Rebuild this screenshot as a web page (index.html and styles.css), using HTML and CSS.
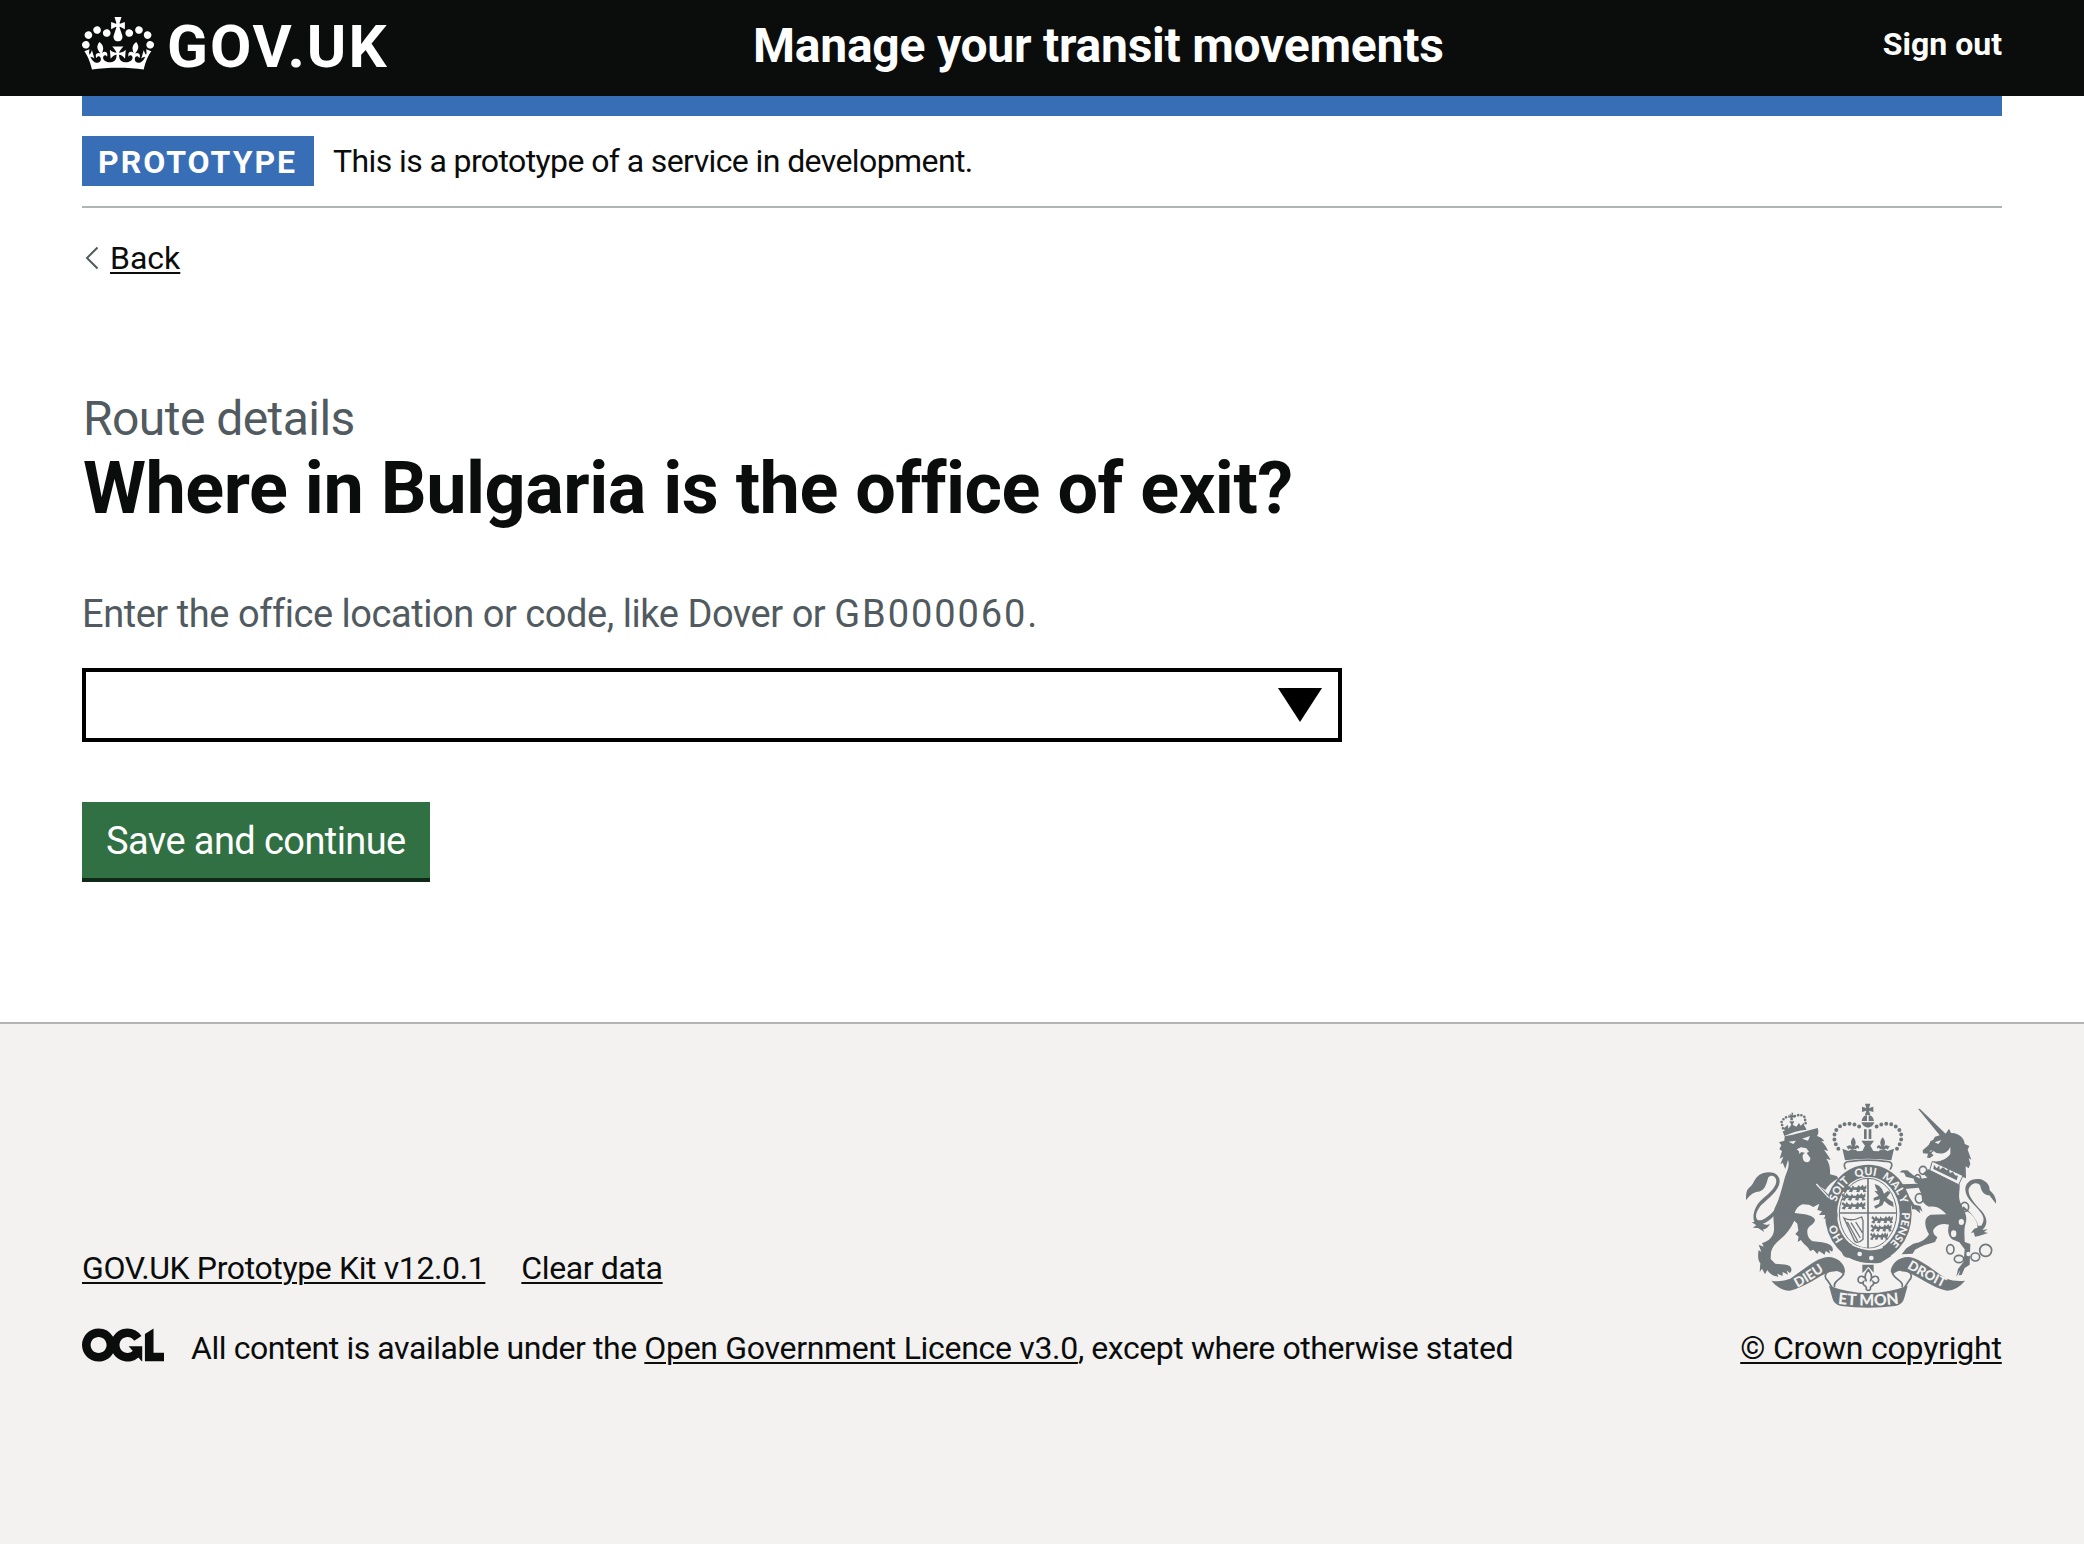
FILE: index.html
```html
<!DOCTYPE html>
<html lang="en">
<head>
<meta charset="utf-8">
<title>Where in Bulgaria is the office of exit? - Manage your transit movements</title>
<link rel="stylesheet" href="styles.css">
</head>
<body>
<header class="header">
  <div class="header-inner container">
    <a class="logo" href="#">
      <svg class="crown" viewBox="0 0 132 97" aria-hidden="true"><path fill="currentColor" fill-rule="evenodd" d="M25 30.2c3.5 1.5 7.7-.2 9.1-3.7 1.5-3.6-.2-7.8-3.9-9.2-3.6-1.4-7.6.3-9.1 3.9-1.4 3.5.3 7.5 3.9 9zM9 39.5c3.6 1.5 7.8-.2 9.2-3.7 1.5-3.6-.2-7.8-3.9-9.1-3.6-1.5-7.6.2-9.1 3.8-1.4 3.5.3 7.5 3.8 9zM4.4 57.2c3.5 1.5 7.7-.2 9.1-3.8 1.5-3.6-.2-7.7-3.9-9.1-3.5-1.5-7.6.3-9.1 3.8-1.4 3.5.3 7.6 3.9 9.1zm38.3-21.4c3.5 1.5 7.7-.2 9.1-3.8 1.5-3.6-.2-7.7-3.9-9.1-3.6-1.5-7.6.3-9.1 3.8-1.3 3.6.4 7.7 3.9 9.1zm64.4-5.6c-3.6 1.5-7.8-.2-9.1-3.7-1.5-3.6.2-7.8 3.8-9.2 3.6-1.4 7.7.3 9.2 3.9 1.3 3.5-.4 7.5-3.9 9zm15.9 9.3c-3.6 1.5-7.7-.2-9.1-3.7-1.5-3.6.2-7.8 3.7-9.1 3.6-1.5 7.7.2 9.2 3.8 1.5 3.5-.3 7.5-3.8 9zm4.7 17.7c-3.6 1.5-7.8-.2-9.2-3.8-1.5-3.6.2-7.7 3.9-9.1 3.6-1.5 7.7.3 9.2 3.8 1.3 3.5-.4 7.6-3.9 9.1zM89.3 35.8c-3.6 1.5-7.8-.2-9.2-3.8-1.4-3.6.2-7.7 3.9-9.1 3.6-1.5 7.7.3 9.2 3.8 1.4 3.6-.3 7.7-3.9 9.1zM69.7 17.7l8.9 4.7V9.3l-8.9 2.8c-.2-.3-.5-.6-.9-.9L72.4 0H59.6l3.5 11.2c-.3.3-.6.5-.9.9l-8.8-2.8v13.1l8.8-4.7c.3.3.6.7.9.9l-5 15.4v.1c-.2.8-.4 1.6-.4 2.4 0 4.1 3.1 7.5 7 8.1h.2c.3 0 .7.1 1 .1.4 0 .7 0 1-.1h.2c4-.6 7.1-4.1 7.1-8.1 0-.8-.1-1.7-.4-2.4V34l-5.1-15.4c.4-.2.7-.6 1-.9zM66 92.8c16.9 0 32.8 1.1 47.1 3.2 4-16.9 8.9-26.7 14-33.5l-9.6-3.4c1 4.9 1.1 7.2 0 10.2-1.5-1.4-3-4.3-4.2-8.7L108.6 76c2.8-2 5-3.2 7.5-3.3-4.4 9.4-10 11.9-13.6 11.2-4.3-.8-6.3-4.6-5.6-7.9 1-4.7 5.7-5.9 8-.5 4.3-8.7-3-11.4-7.6-8.8 7.1-7.2 7.9-13.5 2.1-21.1-8 6.1-8.1 12.3-4.5 20.8-4.7-5.4-12.1-2.5-9.5 6.2 3.4-5.2 7.9-2 7.2 3.1-.6 4.3-6.4 7.8-13.5 7.2-10.3-.9-10.9-8-11.2-13.8 2.5-.5 7.1 1.8 11 7.3L80.2 60c-4.1 4.4-8 5.3-12.3 5.4 1.4-4.4 8-11.6 8-11.6H55.5s6.4 7.2 7.9 11.6c-4.2-.1-8-1-12.3-5.4l1.4 16.4c3.9-5.5 8.5-7.7 10.9-7.3-.3 5.8-.9 12.8-11.1 13.8-7.2.6-12.9-2.9-13.5-7.2-.7-5 3.8-8.3 7.1-3.1 2.7-8.7-4.6-11.6-9.4-6.2 3.7-8.5 3.6-14.7-4.6-20.8-5.8 7.6-5 13.9 2.2 21.1-4.7-2.6-11.9.1-7.7 8.8 2.3-5.5 7.1-4.2 8.1.5.7 3.3-1.3 7.1-5.7 7.9-3.5.7-9-1.8-13.5-11.2 2.5.1 4.7 1.3 7.5 3.3l-4.7-15.4c-1.2 4.4-2.7 7.2-4.3 8.7-1.1-3-.9-5.3 0-10.2l-9.5 3.4c5 6.9 9.9 16.7 14 33.5 14.8-2.1 30.8-3.2 47.7-3.2z"/></svg>
      <span class="logotype">GOV.UK</span>
    </a>
    <a class="service-name" href="#">Manage your transit movements</a>
    <a class="sign-out" href="#">Sign out</a>
  </div>
</header>
<div class="container">
  <div class="header-bar"></div>
  <div class="phase-banner">
    <strong class="tag">PROTOTYPE</strong>
    <span class="phase-text">This is a prototype of a service in development.</span>
  </div>
  <a class="back" href="#">
    <svg class="back-arrow" viewBox="0 0 14 24" aria-hidden="true"><path d="M13.500 1.500 3 12l10.500 10.500" fill="none" stroke="#505a5f" stroke-width="2"/></svg>
    <span class="back-text">Back</span>
  </a>
  <main class="main">
    <span class="caption">Route details</span>
    <h1 class="heading">Where in Bulgaria is the office of exit?</h1>
    <div class="hint">Enter the office location or code, like Dover or <span class="code">GB000060.</span></div>
    <div class="combo">
      <svg class="combo-arrow" viewBox="0 0 44 34" aria-hidden="true"><path d="M0 0h44L22 34z"/></svg>
    </div>
    <button class="button">Save and continue</button>
  </main>
</div>
<footer class="footer">
  <div class="footer-inner container">
    <div class="footer-left">
      <div class="footer-links">
        <a href="#">GOV.UK Prototype Kit v12.0.1</a>
        <a href="#">Clear data</a>
      </div>
      <div class="licence">
        <svg class="ogl" viewBox="0 0 483.2 195.7" aria-hidden="true"><path fill="currentColor" d="M421.5 142.8V.1l-50.7 32.3v161.1h112.4v-50.7zm-122.3-9.6A47.12 47.12 0 0 1 221 97.8c0-26 21.1-47.1 47.1-47.1 16.7 0 31.4 8.7 39.7 21.8l42.7-27.2A97.63 97.63 0 0 0 268.1 0c-36.500 0-68.3 20.1-85.1 49.7A98 98 0 0 0 97.8 0C43.900 0 0 43.900 0 97.8s43.900 97.8 97.8 97.8c36.500 0 68.3-20.1 85.1-49.7a97.76 97.76 0 0 0 149.6 25.4l19.400 22.2h3v-87.8h-80l24.300 27.500zM97.8 145c-26 0-47.1-21.1-47.1-47.1s21.1-47.1 47.1-47.1 47.1 21.1 47.1 47.1S123.8 145 97.8 145"/></svg>
        <span class="licence-text">All content is available under the <a href="#">Open Government Licence v3.0</a>, except where otherwise stated</span>
      </div>
    </div>
    <div class="footer-right">
      <svg class="crest" viewBox="48 40 750 615" aria-hidden="true">
        <defs>
          <path id="garter" d="M415 487A101 115 0 0 1 415 257A101 115 0 0 1 415 487"/>
          <path id="ribbon-left" d="M190 600Q240 575 294 536"/>
          <path id="ribbon-right" d="M524 531Q575 562 647 597"/>
          <path id="ribbon-mid" d="M310 640Q415 656 520 640"/>
          <path id="fleur" d="M0-26C-9-15-8-8-4 2C-11-6-19-2-17 8C-13 4-9 6-8 10H8C9 6 13 4 17 8C19-2 11-6 4 2C8-8 9-15 0-26ZM-9 12H9L12 19H-12Z"/>
          <path id="patty" d="M-8-17H8L4-4L17-8V8L4 4L8 17H-8L-4 4L-17 8V-8L-4-4Z"/>
          <path id="walker" d="M-36-5L-31-11L-24-4L-20-12L-15-5L-8-3L-5-10L0-4L8-4L13-11L18-5L25-12L29-5L36-11V0L32 2L37 9L27 11L25 4L17 3L15 11L5 9L8 4L-3 3L-7 11L-17 9L-13 3L-22 4L-26 12L-36 8L-28 1Z"/>
        </defs>
        <g class="ink">
          <!-- lion -->
          <path d="M164 140C195 135 235 122 263 115C266 124 266 132 261 139C272 142 278 147 283 155L274 154C284 164 291 174 294 184L282 180C290 191 297 200 302 211L289 207C299 221 301 236 300 254L320 259L325 266C308 275 294 288 286 301L270 290L302 322C310 337 321 354 322 373C323 387 316 397 304 400L309 388L295 396L296 383L280 388L288 376L267 376L276 365L262 361L268 342L250 352L237 345L218 344C204 349 198 359 194 370L224 374C245 378 255 385 255 392C252 406 235 407 232 422C231 439 238 449 249 455C267 458 286 457 301 466C310 474 310 482 306 486L297 480L301 492L287 484L284 495L267 484L262 493L250 480L240 484C235 471 221 465 213 451L203 457L206 441L196 433L205 423L202 402L193 393C183 415 170 433 151 449C136 461 126 474 123 487L122 508L136 522C151 525 168 522 180 530C187 538 185 547 179 550L170 542L174 555L158 547L158 559L142 552L145 561C125 559 117 549 112 541L105 554L96 537L89 547L91 521C82 509 84 493 86 481L94 487L86 465L101 471L96 460C118 455 131 438 132 421C133 396 125 373 136 351C149 326 157 291 165 262C174 239 179 226 174 211L166 238L158 219L151 224L160 201L149 207L156 184L148 179L154 167L147 158L163 153Z"/>
          <path d="M48 332C48 311 49 300 60 292C73 283 73 260 98 251C123 242 149 250 149 276C148 302 112 328 93 347C77 367 75 382 82 390C93 398 119 379 134 360L132 378C119 392 106 400 98 402C109 408 119 405 121 400C116 413 108 419 99 419L103 427L84 415L68 414L79 407L65 397L73 397C67 379 72 360 85 341C104 318 139 299 139 273C137 258 123 254 115 263C110 279 108 291 98 300C84 311 71 299 48 332Z"/>
          <!-- lion's crown -->
          <path d="M158 125L224 109L230 120Q196 123 163 139ZM162 115L174 105L175 117L184 105L178 95H193L188 105L199 111L207 100L212 108L222 99L223 112L164 128Z"/>
          <path d="M178 73L185 76L184 69L190 69L188 77L195 77V84L188 83L189 92H181V83L175 85V76L181 79Z"/>
        </g>
        <path class="bead" d="M159 116L154 98L163 85L176 80M195 79L211 75L224 82L227 101"/>
        <path class="paper" d="M176 156L198 153L190 163ZM216 147L240 139L234 153ZM200 179L213 173L229 176L237 186L230 190L241 205C242 219 226 222 220 211C216 199 218 192 226 190L214 187L208 193L207 185Z"/>

        <g class="ink">
          <!-- unicorn -->
          <path d="M564 57L570 58L647 132L657 117L663 130C690 129 705 151 704 163L718 169L713 180L724 210L716 206L721 222L716 236L707 230L708 266L602 224L612 215C630 217 649 209 661 193L661 171C653 190 637 194 619 190L611 184L604 191L611 197L600 205L591 204L594 192L579 191L578 182L596 166L602 154L609 151L615 141L629 137Z"/>
          <path d="M595 239L688 279C692 301 683 314 690 336C701 365 714 374 707 401C701 419 704 439 704 457L721 463L719 525L704 535L695 556L686 557L691 542L679 561L684 538L701 516L704 479L688 458L666 449C652 435 653 419 657 405C641 401 624 403 612 417C605 428 614 437 622 443L615 457C595 462 573 469 555 480L548 492L515 494L529 476L550 462C573 459 587 450 597 434C579 403 584 381 603 375L649 374C636 358 619 347 597 351C580 344 574 331 575 315L566 294L524 298L536 319L553 345L571 349L578 366L568 359L571 371L555 359L546 359L545 350L530 327L520 301L515 284L564 282L552 267L528 261L522 249L509 248L516 242L532 242L550 257L571 267L592 264L579 251Z"/>
          <path d="M693 360C722 360 747 397 742 415C733 413 729 421 723 431L731 428L735 441L749 438L774 430L762 427L773 419L757 421C779 401 768 377 752 361C731 339 713 317 716 299C722 280 742 275 751 288C754 310 767 316 778 317L798 342V332C794 316 788 310 779 302C780 285 767 275 753 269C723 264 705 280 706 301C709 330 735 345 751 367C763 382 764 393 754 408L744 408C740 386 719 366 700 350Z"/>
        </g>
        <path class="paper" d="M614 158L634 151L625 163ZM598 184L608 181L602 186Z"/>
        <path class="collar" d="M607 215L699 258L686 285L599 242Z"/>
        <path class="ink" d="M610 238L612 225L620 236L628 227L629 240L639 233L650 242L657 237L659 250L669 247L675 257L684 258L680 272Z"/>
        <g class="chain">
          <ellipse cx="579" cy="242" rx="11" ry="12"/><ellipse cx="563" cy="267" rx="9" ry="12"/><ellipse cx="568" cy="326" rx="12" ry="14"/><ellipse cx="704" cy="352" rx="12" ry="14"/>
          <ellipse cx="661" cy="479" rx="11" ry="14"/><ellipse cx="687" cy="508" rx="14" ry="11"/><ellipse cx="736" cy="502" rx="13" ry="12"/><circle cx="767" cy="482" r="18"/>
        </g>
        <g class="paper"><ellipse cx="694" cy="397" rx="8" ry="9"/><ellipse cx="671" cy="432" rx="8" ry="10"/><ellipse cx="715" cy="493" rx="6" ry="7"/></g>

        <!-- royal crown -->
        <g class="ink">
          <use href="#patty" x="413" y="59"/>
          <path d="M395 94Q398 77 411 77V94ZM416 77Q429 77 432 94H416ZM394 98H433Q429 112 414 114Q399 113 394 98ZM402 119H410V148H402ZM416 119H424V148H416Z"/>
          <path d="M337 177L355 184L367 178L380 185L397 184L405 168L394 153H432L421 168L430 184L447 185L460 178L472 184L492 177L484 212Q414 203 345 212ZM349 168L362 172L356 180ZM480 168L465 172L472 180Z"/>
          <use href="#fleur" x="370" y="169"/><use href="#fleur" x="458" y="169"/>
        </g>
        <path class="dots" d="M325 177C309 155 308 128 326 113C347 96 375 102 391 113M501 177C518 155 519 128 501 113C480 96 452 102 436 113"/>

        <!-- garter and shield -->
        <path class="outline" d="M347 239C337 221 347 214 363 215Q414 208 465 215C483 214 492 221 480 240"/>
        <ellipse class="ring" cx="415" cy="372" rx="112" ry="129"/>
        <ellipse class="shield" cx="414" cy="371" rx="86" ry="105"/>
        <path class="cross" d="M414 266V476M328 370H501"/>
        <g class="ink">
          <use href="#walker" x="373" y="297"/><use href="#walker" x="370" y="322"/><use href="#walker" x="370" y="348"/>
          <use href="#walker" transform="translate(456 390) scale(.9 1)"/><use href="#walker" transform="translate(453 415) scale(.88 1)"/><use href="#walker" transform="translate(447 440) scale(.75 1)"/>
          <path d="M434 283L447 288L456 298L462 312L474 303L481 309L470 324L489 338L491 352L476 345L463 334L457 347L437 357L432 350L447 342L450 329L431 333L431 325L446 318L433 303L443 305L437 294Z"/>
        </g>
        <path class="harp" d="M342 385Q363 397 395 382L399 393V449Q384 464 374 454ZM352 397L383 454M363 399L391 445M377 397L397 429"/>
        <path class="ink" d="M338 453L359 461Q395 488 461 484L444 477Q462 482 484 499L452 519Q404 526 353 501L339 494L348 479Z"/>
        <path class="outline" d="M353 456C338 451 337 462 342 466L344 478L338 489C343 501 353 504 359 499"/>
        <path class="paper-line" d="M367 466Q420 487 458 473"/>
        <g class="paper"><circle cx="389" cy="493" r="7"/><circle cx="424" cy="505" r="7"/></g>
        <!-- lion's forepaw over the garter -->
        <path class="ink" d="M290 325C308 338 325 360 323 380L316 396L304 400L309 388L295 396L290 380Z"/>
        <path class="paper-line" d="M259 283L296 324"/>
        <g class="motto garter-text">
          <text><textPath href="#garter" startOffset="112">HO</textPath></text>
          <text><textPath href="#garter" startOffset="242">SOIT</textPath></text>
          <text><textPath href="#garter" startOffset="331">QUI</textPath></text>
          <text><textPath href="#garter" startOffset="430">MAL Y</textPath></text>
          <text><textPath href="#garter" startOffset="556">PENSE</textPath></text>
        </g>

        <!-- ribbon -->
        <g class="ink">
          <path d="M124 573Q153 578 181 567C222 539 262 503 293 502C322 501 344 522 345 544L342 558C334 546 323 542 302 545C266 559 223 595 179 603Q147 602 124 573Z"/>
          <path d="M705 573Q676 577 649 567C607 540 567 504 536 502C507 501 484 522 482 545L487 557C496 545 507 541 527 545C565 560 607 595 651 603Q683 601 705 573Z"/>
          <path d="M297 588Q415 632 533 588L523 624Q518 645 496 649Q415 659 333 649Q312 645 307 625Z"/>
          <path d="M397 525H431V549L426 543L415 531L403 545L397 550Z"/>
        </g>
        <path class="outline" d="M315 543C286 541 279 560 293 573L307 594M340 553C336 569 307 574 314 593M514 543C545 541 550 560 537 573L523 594M489 553C494 569 523 574 516 593"/>
        <path class="outline" d="M415 540C403 554 404 566 409 575C407 559 386 553 384 570C384 580 393 583 400 577C396 590 407 585 409 594C406 605 424 605 421 594C424 585 434 590 430 577C437 583 446 580 446 570C444 553 423 559 421 575C426 566 427 554 415 540Z"/>
        <g class="motto ribbon-text">
          <text><textPath href="#ribbon-left" startOffset="50%">DIEU</textPath></text>
          <text><textPath href="#ribbon-right" startOffset="50%">DROIT</textPath></text>
          <text class="mid"><textPath href="#ribbon-mid" startOffset="50%">ET MON</textPath></text>
        </g>
      </svg>
      <a class="copyright" href="#">© Crown copyright</a>
    </div>
  </div>
</footer>
</body>
</html>
```
FILE: styles.css
```css
* { box-sizing: border-box; }
body {
  margin: 0;
  min-height: 1544px;
  display: flex;
  flex-direction: column;
  background: #fff;
  color: #0b0c0c;
  font-family: Roboto, "Liberation Sans", sans-serif;
  font-size: 32px;
  font-variant-ligatures: none;
  white-space: nowrap;
}
a { color: inherit; text-decoration-thickness: 2px; text-underline-offset: 3px; }
svg { display: block; flex: none; }
.container { width: 1920px; margin: 0 auto; }

.header { height: 96px; background: #0b0c0c; color: #fff; }
.header a { text-decoration: none; font-weight: 700; }
.header-inner { display: grid; grid-template-columns: 671px 1fr auto; align-items: start; }
.logo { display: flex; gap: 13px; }
.crown { width: 72px; height: 53px; margin-top: 17px; }
.logotype { font-size: 60px; line-height: 93px; letter-spacing: 2px; }
.service-name { font-size: 48px; line-height: 92px; letter-spacing: -0.24px; }
.sign-out { line-height: 88px; }
.header-bar { height: 20px; background: #376eb5; }

.phase-banner { display: flex; gap: 19px; padding: 20px 0; border-bottom: 2px solid #b1b4b6; }
.tag { width: 232px; height: 50px; padding: 2px 0 0 16px; background: #376eb5; color: #fff; line-height: 48px; letter-spacing: 2px; }
.phase-text { line-height: 50px; letter-spacing: -0.6px; }

.back { display: flex; align-items: center; gap: 12px; width: fit-content; height: 40px; margin-top: 30px; padding-left: 2px; text-decoration: none; }
.back-arrow { width: 14px; height: 24px; }
.back-text { line-height: 40px; text-decoration: underline 2px; text-underline-offset: 3px; }

.main { display: flex; flex-direction: column; align-items: flex-start; padding: 116px 0 140px; }
.caption { padding-left: 1px; font-size: 48px; line-height: 50px; letter-spacing: -0.55px; color: #505a5f; }
.heading { margin: 6px 0 61px; padding-left: 1px; font-size: 72px; line-height: 78px; font-weight: 700; letter-spacing: -0.48px; }
.hint { font-size: 38px; line-height: 50px; letter-spacing: -0.45px; color: #505a5f; }
.code { letter-spacing: 1.9px; }
.combo { display: flex; justify-content: flex-end; width: 1260px; height: 74px; margin: 29px 0 60px; padding: 16px; border: 4px solid #000; }
.combo-arrow { width: 44px; height: 34px; }
.button { width: 348px; height: 76px; margin-bottom: 4px; padding: 2px 0 0 24px; border: 0; background: #307042; box-shadow: 0 4px 0 #102818; color: #fff; font: 38px/74px Roboto, "Liberation Sans", sans-serif; letter-spacing: -0.58px; text-align: left; }

.footer { flex: 1; border-top: 2px solid #b1b4b6; background: #f3f2f1; padding-top: 79px; }
.footer-inner { display: flex; justify-content: space-between; align-items: flex-end; line-height: 40px; }
.footer-left { display: flex; flex-direction: column; gap: 40px; }
.footer-links { display: flex; gap: 36px; letter-spacing: -0.38px; }
.licence { display: flex; gap: 27px; }
.licence-text { letter-spacing: -0.43px; }
.licence-text a { letter-spacing: -0.31px; }
.ogl { width: 82px; height: 34px; }
.footer-right { display: flex; flex-direction: column; align-items: center; gap: 20px; width: 262px; }
.copyright { letter-spacing: -0.2px; }
.crest { width: 250px; height: 205px; }

.ink { fill: #6f777b; }
.paper { fill: #f3f2f1; }
.bead { fill: none; stroke: #6f777b; stroke-width: 8; stroke-linecap: round; stroke-dasharray: 0 10; }
.dots { fill: none; stroke: #6f777b; stroke-width: 12; stroke-linecap: round; stroke-dasharray: 0 15; }
.collar { fill: #f3f2f1; stroke: #6f777b; stroke-width: 3; }
.chain { fill: none; stroke: #6f777b; stroke-width: 5; }
.outline { fill: none; stroke: #6f777b; stroke-width: 5; }
.paper-line { fill: none; stroke: #f3f2f1; stroke-width: 4; }
.ring { fill: #f3f2f1; stroke: #6f777b; stroke-width: 36; }
.shield { fill: #f3f2f1; stroke: #6f777b; stroke-width: 3; }
.cross { fill: none; stroke: #6f777b; stroke-width: 5; }
.harp { fill: none; stroke: #6f777b; stroke-width: 4; }
.motto { fill: #f3f2f1; font-family: Lato, sans-serif; font-weight: 900; letter-spacing: 0; text-anchor: middle; }
.garter-text { font-size: 33px; }
.ribbon-text { font-size: 40px; }
.ribbon-text .mid { font-size: 47px; }
```
